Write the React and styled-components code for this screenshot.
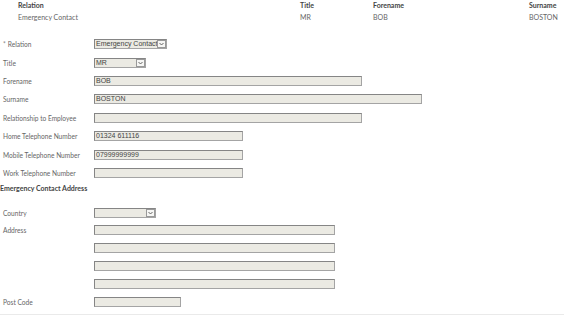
import React from 'react';
import styled, { createGlobalStyle } from 'styled-components';

const GlobalStyle = createGlobalStyle`
  html, body {
    margin: 0;
    padding: 0;
    background: #fff;
  }
  body {
    font-family: Lato, "Open Sans", sans-serif;
    color: #555;
  }
`;

const Page = styled.div`
  width: 564px;
  height: 315px;
  overflow: hidden;
  border-bottom: 1px solid #eaeaea;
  box-sizing: border-box;
`;

const Summary = styled.div`
  display: grid;
  grid-template-columns: 282px 73px 156px auto;
  align-content: start;
  padding-left: 18px;
  font-size: 7px;
  line-height: 11.5px;
  height: 35px;
  box-sizing: border-box;
`;

const HeadCell = styled.div`
  font-weight: 700;
  color: #444;
`;

const Cell = styled.div`
  color: #666;
`;

const Form = styled.div`
  display: flex;
  flex-direction: column;
`;

const Row = styled.div`
  display: grid;
  grid-template-columns: 94px 1fr;
  align-items: center;
  height: ${p => (p.tight ? 17.8 : 18.4)}px;
`;

const Label = styled.div`
  padding-left: 3px;
  font-size: 6.6px;
  color: #666;
  white-space: nowrap;
`;

const Star = styled.span`
  color: #888;
  margin-right: 2px;
`;

const Field = styled.div`
  width: ${p => p.w}px;
  height: 10px;
  box-sizing: border-box;
  background: #ebeae3;
  border: 1px solid #a4a4a4;
  border-top-color: #858585;
  border-left-color: #858585;
  font-family: "Liberation Sans", Arial, sans-serif;
  font-size: 7px;
  line-height: 8px;
  color: #444;
  padding-left: 1px;
  display: flex;
  align-items: center;
  justify-content: space-between;
  overflow: hidden;
  white-space: nowrap;
`;

const Arrow = styled.span`
  width: 9px;
  height: 8px;
  box-sizing: border-box;
  background: #f6f6f4;
  border: 1px solid #999;
  display: flex;
  align-items: center;
  justify-content: center;
  flex-shrink: 0;
`;

const Heading = styled.div`
  font-size: 7px;
  font-weight: 700;
  color: #444;
  height: 12px;
  line-height: 12px;
  margin-bottom: 9.6px;
`;

const Chevron = () => (
  <svg width="5" height="4" viewBox="0 0 5 4">
    <path d="M0.5 1 L2.5 3 L4.5 1" fill="none" stroke="#555" strokeWidth="0.9" />
  </svg>
);

const Select = ({ w, value }) => (
  <Field w={w}>
    <span>{value}</span>
    <Arrow><Chevron /></Arrow>
  </Field>
);

const FormRow = ({ label, required, tight, children }) => (
  <Row tight={tight}>
    <Label>{required && <Star>*</Star>}{label}</Label>
    <div>{children}</div>
  </Row>
);

export default function App() {
  return (
    <Page>
      <GlobalStyle />
      <Summary>
        <HeadCell>Relation</HeadCell>
        <HeadCell>Title</HeadCell>
        <HeadCell>Forename</HeadCell>
        <HeadCell>Surname</HeadCell>
        <Cell>Emergency Contact</Cell>
        <Cell>MR</Cell>
        <Cell>BOB</Cell>
        <Cell>BOSTON</Cell>
      </Summary>
      <Form>
        <FormRow label="Relation" required><Select w={73} value="Emergency Contact" /></FormRow>
        <FormRow label="Title"><Select w={52} value="MR" /></FormRow>
        <FormRow label="Forename"><Field w={268}>BOB</Field></FormRow>
        <FormRow label="Surname"><Field w={328}>BOSTON</Field></FormRow>
        <FormRow label="Relationship to Employee"><Field w={268} /></FormRow>
        <FormRow label="Home Telephone Number"><Field w={149}>01324 611116</Field></FormRow>
        <FormRow label="Mobile Telephone Number"><Field w={149}>07999999999</Field></FormRow>
        <FormRow label="Work Telephone Number"><Field w={149} /></FormRow>
        <Heading>Emergency Contact Address</Heading>
        <FormRow tight label="Country"><Select w={62} value="" /></FormRow>
        <FormRow tight label="Address"><Field w={241} /></FormRow>
        <FormRow tight label=""><Field w={241} /></FormRow>
        <FormRow tight label=""><Field w={241} /></FormRow>
        <FormRow tight label=""><Field w={241} /></FormRow>
        <FormRow tight label="Post Code"><Field w={87} /></FormRow>
      </Form>
    </Page>
  );
}
